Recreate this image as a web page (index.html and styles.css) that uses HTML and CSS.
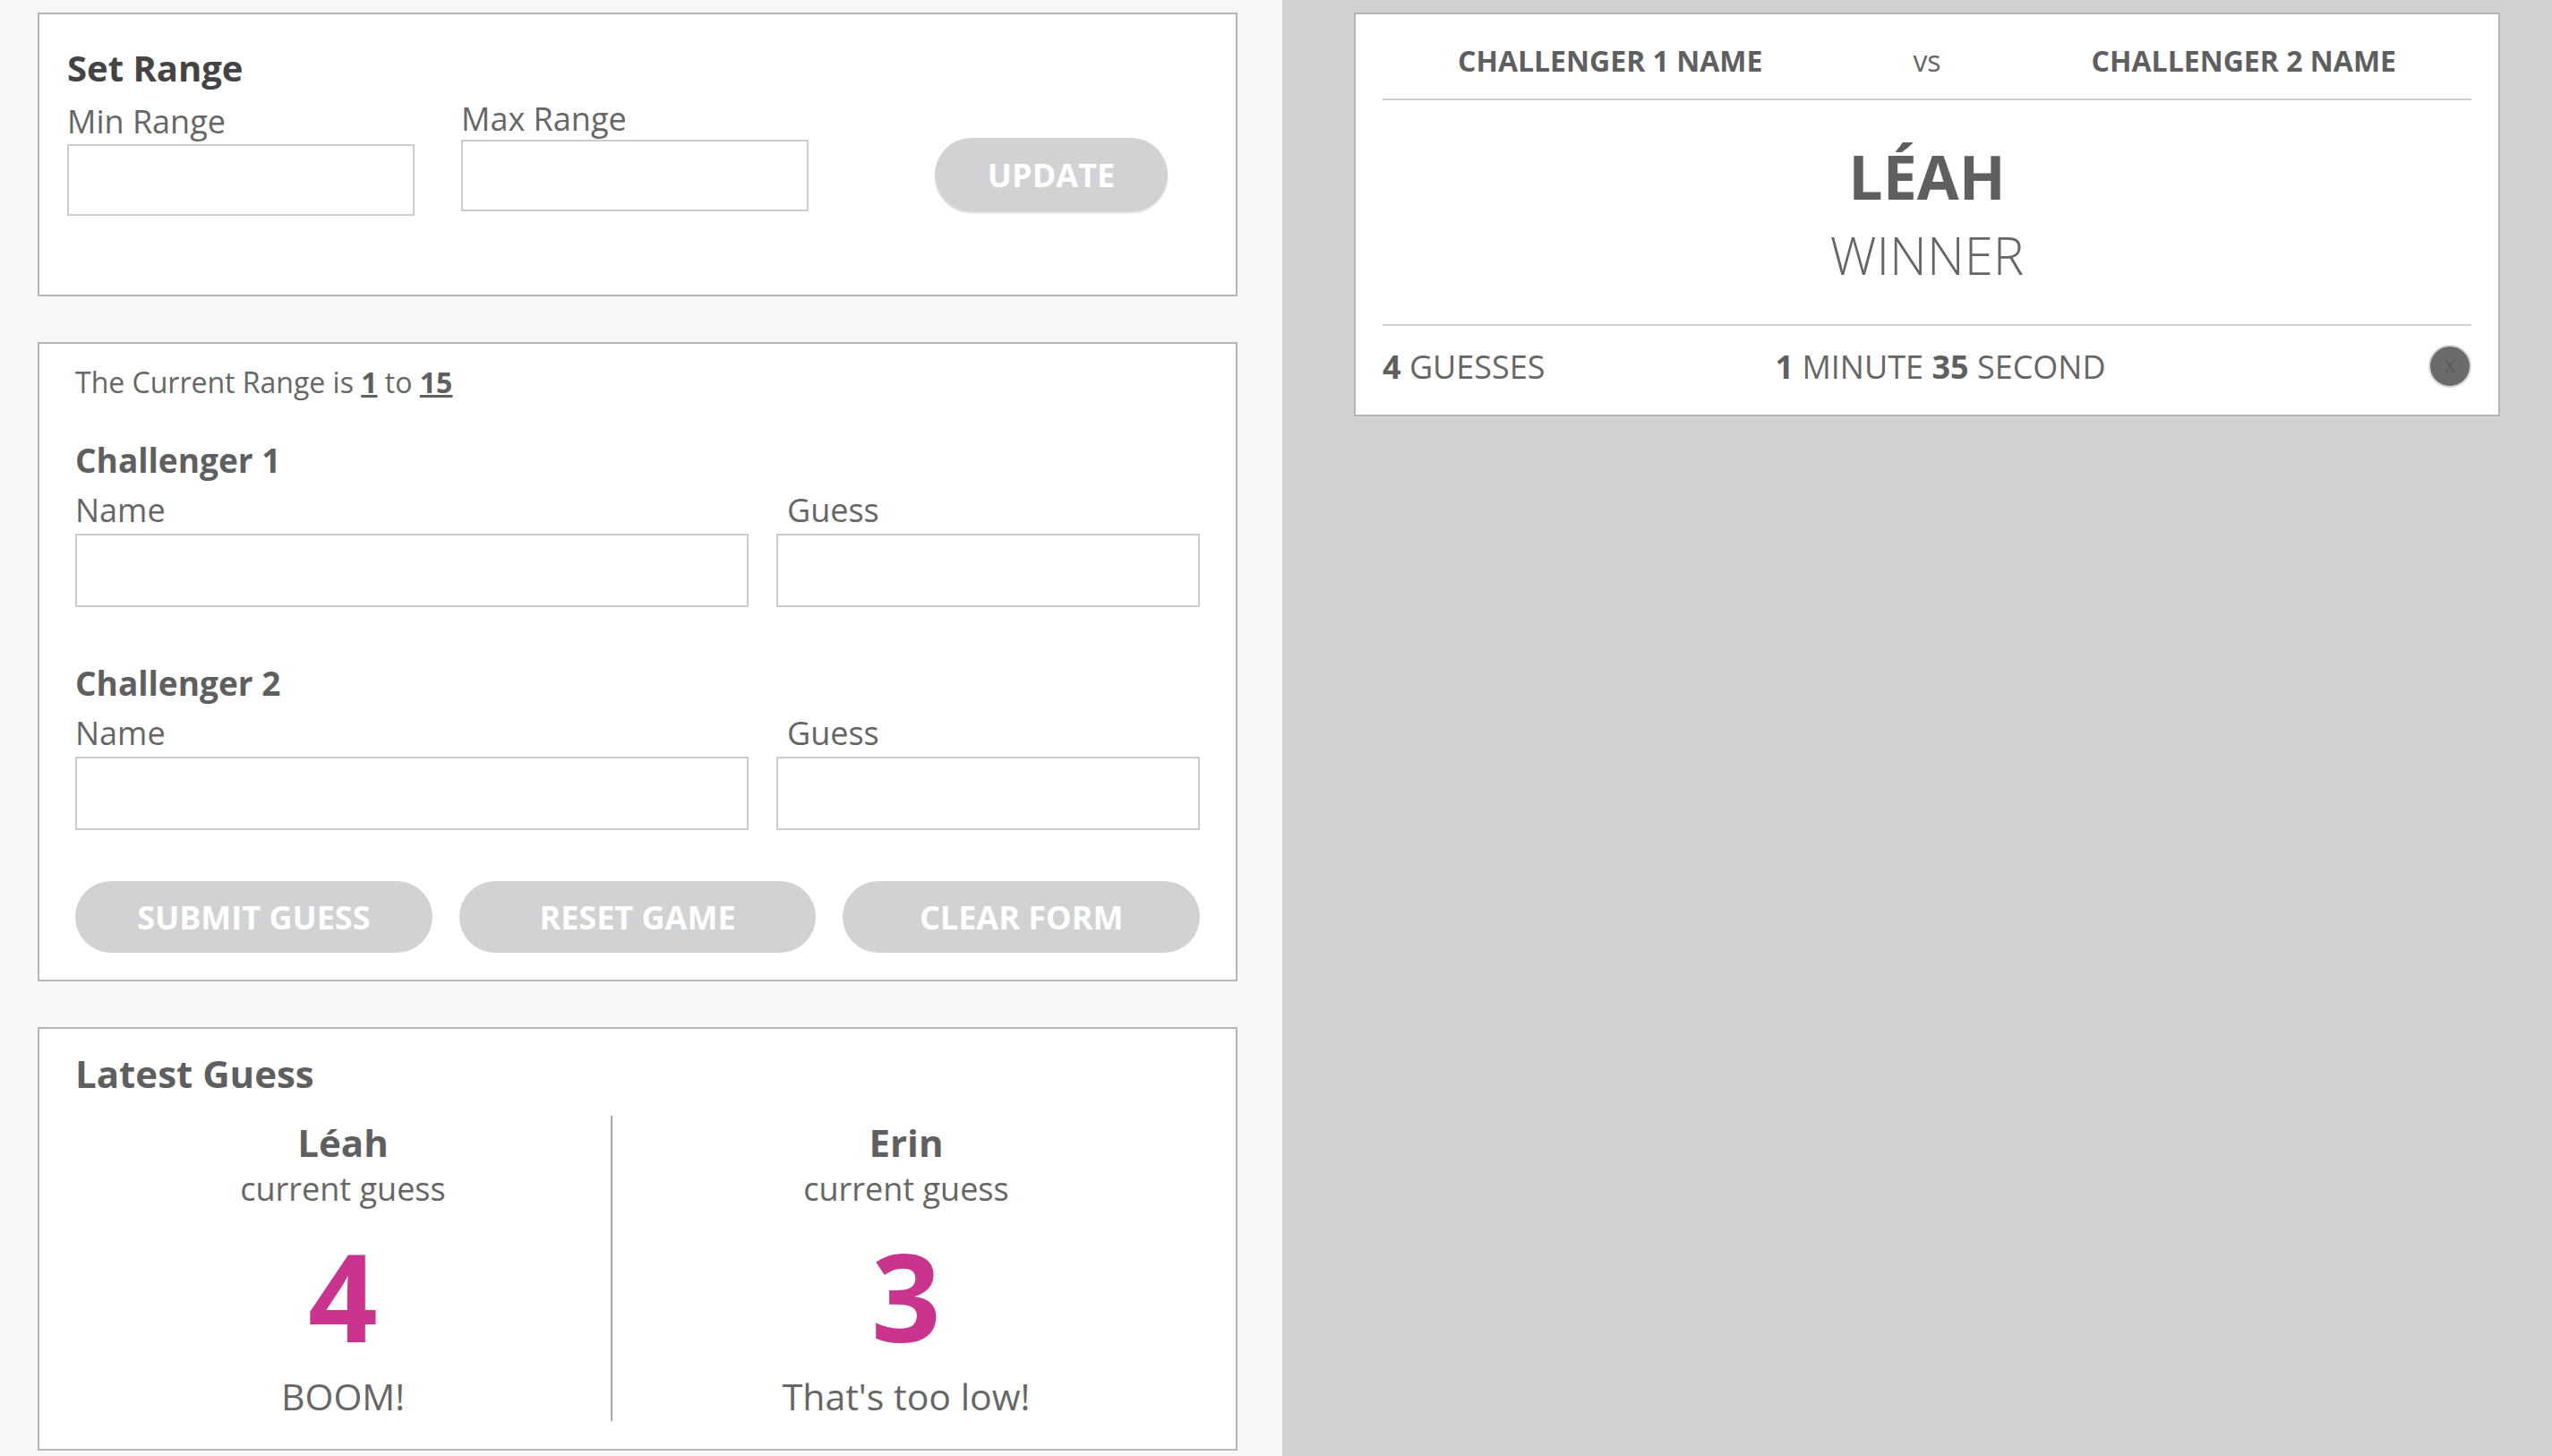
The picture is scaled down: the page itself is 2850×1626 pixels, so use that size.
FILE: index.html
```html
<!DOCTYPE html>
<html lang="en">
<head>
<meta charset="utf-8">
<title>Number Guesser</title>
<link rel="stylesheet" href="styles.css">
</head>
<body>
<main class="layout">
  <section class="left">
    <div class="card card-range">
      <div class="range-row">
        <div class="field min-group">
          <h2 class="set-title">Set Range</h2>
          <label class="lbl">Min Range</label>
          <input class="inp" type="text">
        </div>
        <div class="field max-group">
          <label class="lbl">Max Range</label>
          <input class="inp" type="text">
        </div>
        <button class="pill update">UPDATE</button>
      </div>
    </div>

    <div class="card card-form">
      <p class="current">The Current Range is <b><u>1</u></b> to <b><u>15</u></b></p>
      <h3 class="ch-title first">Challenger 1</h3>
      <div class="field-row">
        <div><label class="lbl">Name</label><input class="inp tall" type="text"></div>
        <div><label class="lbl guess-lbl">Guess</label><input class="inp tall" type="text"></div>
      </div>
      <h3 class="ch-title second">Challenger 2</h3>
      <div class="field-row">
        <div><label class="lbl">Name</label><input class="inp tall" type="text"></div>
        <div><label class="lbl guess-lbl">Guess</label><input class="inp tall" type="text"></div>
      </div>
      <div class="btn-row">
        <button class="pill">SUBMIT GUESS</button>
        <button class="pill">RESET GAME</button>
        <button class="pill">CLEAR FORM</button>
      </div>
    </div>

    <div class="card card-latest">
      <h3 class="latest-title">Latest Guess</h3>
      <div class="latest-cols">
        <div class="latest-col">
          <div class="who">Léah</div>
          <div class="cur">current guess</div>
          <div class="num">4</div>
          <div class="msg">BOOM!</div>
        </div>
        <div class="latest-col right-col">
          <div class="who">Erin</div>
          <div class="cur">current guess</div>
          <div class="num">3</div>
          <div class="msg">That's too low!</div>
        </div>
      </div>
    </div>
  </section>

  <section class="right">
    <div class="result">
      <div class="result-head">
        <span class="cname">CHALLENGER 1 NAME</span>
        <span class="vs">vs</span>
        <span class="cname">CHALLENGER 2 NAME</span>
      </div>
      <div class="result-mid">
        <div class="winner-name">LÉAH</div>
        <div class="winner-label">WINNER</div>
      </div>
      <div class="result-foot">
        <span class="stat"><b>4</b> GUESSES</span>
        <span class="stat mid"><b>1</b> MINUTE <b>35</b> SECOND</span>
        <button class="close">X</button>
      </div>
    </div>
  </section>
</main>
</body>
</html>
```

FILE: styles.css
```css
* { box-sizing: border-box; }

html, body {
  margin: 0;
  padding: 0;
}

body {
  font-family: "Open Sans", "Noto Sans", sans-serif;
  color: #666666;
  width: 2850px;
  height: 1626px;
  overflow: hidden;
}

.layout {
  display: flex;
  height: 1626px;
}

.left {
  width: 1432px;
  background: #f7f7f7;
  padding: 14px 0 0 42px;
}

.right {
  flex: 1;
  background: #d1d2d4;
  padding: 14px 0 0 80px;
}

.card {
  width: 1340px;
  background: #ffffff;
  border: 2px solid #b6b6b6;
  margin-bottom: 51px;
}

/* ---------- Set range ---------- */
.card-range {
  height: 317px;
  padding: 36px 0 0 31px;
}

.range-row {
  display: flex;
  align-items: flex-end;
}

.field { display: flex; flex-direction: column; }

.min-group { width: 388px; }

.set-title {
  margin: 0 0 14px;
  font-size: 40px;
  line-height: 48px;
  font-weight: 700;
  color: #444444;
}

.lbl {
  display: block;
  font-size: 36px;
  line-height: 43px;
  margin-bottom: 4px;
  color: #666666;
}

.inp {
  display: block;
  width: 100%;
  height: 80px;
  border: 2px solid #cccccc;
  background: #ffffff;
  margin: 0;
  padding: 0 12px;
  font: inherit;
}

.max-group {
  width: 388px;
  margin-left: 52px;
  margin-bottom: 5px;
}
.max-group .lbl { margin-bottom: 2px; }

.pill {
  border: none;
  background: #d1d2d4;
  color: #ffffff;
  font-family: "Open Sans", "Noto Sans", sans-serif;
  font-weight: 700;
  font-size: 36px;
  height: 80px;
  border-radius: 40px;
  padding: 0;
  cursor: pointer;
}

.update {
  width: 260px;
  height: 82px;
  border-radius: 41px;
  margin-left: 141px;
  margin-bottom: 5px;
  box-shadow: 0 2px 2px rgba(0, 0, 0, 0.16);
}

/* ---------- Guess form ---------- */
.card-form {
  height: 714px;
  padding: 24px 40px 0 40px;
}

.current {
  margin: 0;
  font-size: 32px;
  line-height: 38px;
}
.current b { color: #5f5f5f; }

.ch-title {
  margin: 0;
  font-size: 37px;
  line-height: 44px;
  font-weight: 700;
  color: #5f5f5f;
}
.ch-title.first { margin-top: 46px; }
.ch-title.second { margin-top: 63px; }

.field-row {
  display: grid;
  grid-template-columns: 752px 473px;
  column-gap: 31px;
  margin-top: 12px;
}
.field-row .lbl { margin-bottom: 5px; }
.guess-lbl { padding-left: 12px; }
.inp.tall { height: 82px; }

.btn-row {
  display: grid;
  grid-template-columns: repeat(3, 1fr);
  column-gap: 30px;
  margin-top: 57px;
}

/* ---------- Latest guess ---------- */
.card-latest {
  height: 473px;
  padding: 25px 40px 0 40px;
  margin-bottom: 0;
}

.latest-title {
  margin: 0;
  font-size: 42px;
  line-height: 50px;
  font-weight: 700;
  color: #5f5f5f;
}

.latest-cols {
  display: grid;
  grid-template-columns: 598px 1fr;
  margin-top: 22px;
  height: 341px;
}

.latest-col {
  text-align: center;
  padding-top: 5px;
}

.right-col { border-left: 2px solid #a8a8a8; }

.who {
  font-size: 42px;
  line-height: 50px;
  font-weight: 700;
  color: #5f5f5f;
}

.cur {
  font-size: 36px;
  line-height: 43px;
  margin-top: 5px;
}

.num {
  font-size: 136px;
  line-height: 136px;
  font-weight: 700;
  color: #ca348f;
  margin-top: 30px;
}

.msg {
  font-size: 41px;
  line-height: 50px;
  margin-top: 19px;
}

/* ---------- Result card ---------- */
.result {
  width: 1280px;
  height: 451px;
  background: #ffffff;
  border: 2px solid #b4b6b4;
  padding: 0 30px;
}

.result-head {
  display: flex;
  justify-content: space-around;
  align-items: center;
  padding: 33px 0 23px;
  border-bottom: 2px solid #d1d2d4;
  font-size: 32px;
  line-height: 38px;
}

.cname { font-weight: 700; color: #5f5f5f; }
.vs { font-weight: 400; color: #666666; }

.result-mid {
  text-align: center;
  padding: 47px 0 45px;
  border-bottom: 2px solid #d1d2d4;
}

.winner-name {
  font-size: 68px;
  line-height: 75px;
  font-weight: 700;
  color: #5f5f5f;
}

.winner-label {
  font-size: 58px;
  line-height: 64px;
  font-weight: 300;
  margin-top: 19px;
  color: #666666;
}

.result-foot {
  display: grid;
  grid-template-columns: 1fr auto 1fr;
  align-items: center;
  height: 96px;
  padding-bottom: 6px;
  font-size: 36px;
  line-height: 43px;
}

.stat b { color: #5f5f5f; }
.stat.mid { padding-left: 30px; }

.close {
  justify-self: end;
  width: 48px;
  height: 48px;
  border-radius: 50%;
  background: #6b6b6b;
  border: 2px solid #d6d6d6;
  color: #5a5a5a;
  font-family: "Open Sans", "Noto Sans", sans-serif;
  font-size: 20px;
  line-height: 1;
  padding: 0;
  cursor: pointer;
}
```
